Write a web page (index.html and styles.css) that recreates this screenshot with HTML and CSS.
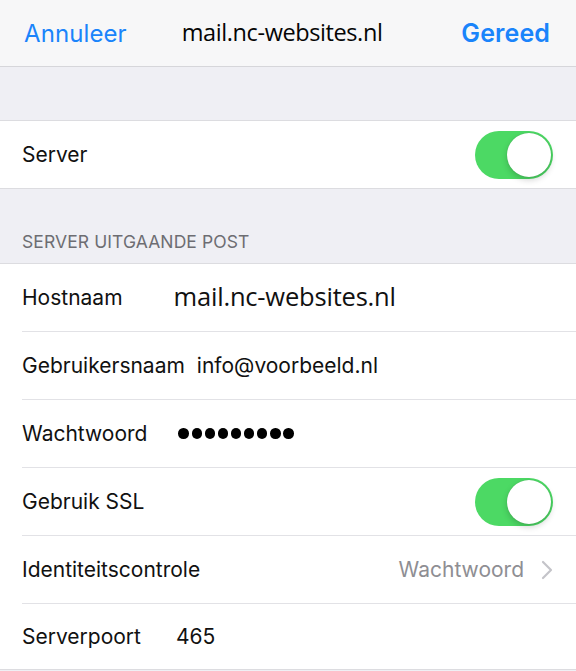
FILE: index.html
```html
<!DOCTYPE html>
<html lang="nl">
<head>
<meta charset="utf-8">
<title>mail.nc-websites.nl</title>
<link rel="stylesheet" href="styles.css">
</head>
<body>
<div class="screen">
  <header class="nav">
    <span class="nav-btn">Annuleer</span>
    <span class="nav-title">mail.nc-websites.nl</span>
    <span class="nav-btn nav-done">Gereed</span>
  </header>

  <div class="gap gap-top"></div>

  <section class="group">
    <div class="row row-single">
      <span class="label">Server</span>
      <span class="toggle"><span class="knob"></span></span>
    </div>
  </section>

  <div class="section-head">SERVER UITGAANDE POST</div>

  <section class="group">
    <div class="row">
      <span class="label">Hostnaam</span>
      <span class="value value-host">mail.nc-websites.nl</span>
    </div>
    <div class="row">
      <span class="label">Gebruikersnaam</span>
      <span class="value value-user">info@voorbeeld.nl</span>
    </div>
    <div class="row">
      <span class="label">Wachtwoord</span>
      <span class="value value-pass"><i></i><i></i><i></i><i></i><i></i><i></i><i></i><i></i><i></i></span>
    </div>
    <div class="row">
      <span class="label">Gebruik SSL</span>
      <span class="toggle"><span class="knob"></span></span>
    </div>
    <div class="row">
      <span class="label">Identiteitscontrole</span>
      <span class="detail">Wachtwoord
        <svg class="chev" width="12" height="20" viewBox="0 0 12 20"><path d="M2 2 L10 10 L2 18" fill="none" stroke="#c4c4c9" stroke-width="2.2" stroke-linecap="round" stroke-linejoin="round"/></svg>
      </span>
    </div>
    <div class="row row-end">
      <span class="label">Serverpoort</span>
      <span class="value value-port">465</span>
    </div>
  </section>
</div>
</body>
</html>
```

FILE: styles.css
```css
* { box-sizing: border-box; }
html, body { margin: 0; padding: 0; }
body {
  background: #efeff4;
  font-family: Inter, "Noto Sans", "Liberation Sans", sans-serif;
  color: #111;
  width: 576px;
  height: 671px;
  overflow: hidden;
}
.screen { display: flex; flex-direction: column; }

.nav {
  height: 67px;
  background: #f7f7f8;
  border-bottom: 1px solid #d6d6da;
  display: flex;
  align-items: center;
  padding: 0 26px 0 24px;
}
.nav-btn {
  color: #1a84fb;
  font-size: 24px;
  letter-spacing: 0.1px;
}
.nav-title {
  font-family: "Open Sans", sans-serif;
  font-size: 23.5px;
  color: #050505;
  margin-left: 55px;
  letter-spacing: -0.4px;
  margin-top: -2px;
  flex: 1;
}
.nav-done { font-weight: 600; font-size: 25px; }

.gap-top { height: 53px; }

.group {
  background: #fff;
  border-top: 1px solid #dcdce0;
  border-bottom: 1px solid #dcdce0;
}
.row {
  height: 68px;
  margin-left: 22px;
  padding-right: 23px;
  display: flex;
  align-items: center;
  border-bottom: 1px solid #e2e2e6;
}
.row-single { height: 67px; border-bottom: none; }
.row-end { height: 65px; border-bottom: none; }
.label {
  font-size: 21px;
  color: #111;
  white-space: nowrap;
}
.value { font-size: 21px; color: #111; }
.value-host {
  font-family: "Open Sans", sans-serif;
  font-size: 25.5px;
  margin-left: 51px;
  margin-top: -4px;
  letter-spacing: -0.2px;
}
.value-user { margin-left: 12px; }
.value-pass { margin-left: 31px; display: flex; gap: 2.6px; }
.value-pass i {
  display: block;
  width: 10.5px; height: 10.5px;
  border-radius: 50%;
  background: #000;
}
.value-port { margin-left: 35px; }

.toggle {
  margin-left: auto;
  width: 78px;
  height: 48px;
  border-radius: 24px;
  background: #4cd964;
  display: flex;
  align-items: center;
  justify-content: flex-end;
  padding: 2px;
}
.knob {
  width: 44px; height: 44px;
  border-radius: 50%;
  background: #fff;
  box-shadow: 0 3px 6px rgba(0,0,0,0.18), 0 0 1px rgba(0,0,0,0.2);
}

.detail {
  margin-left: auto;
  color: #8e8e93;
  font-size: 21px;
  display: flex;
  align-items: center;
  gap: 17px;
}

.section-head {
  height: 74px;
  display: flex;
  align-items: flex-end;
  padding: 0 0 11px 22px;
  color: #6d6d72;
  font-size: 17.5px;
  letter-spacing: 0.1px;
}
```
